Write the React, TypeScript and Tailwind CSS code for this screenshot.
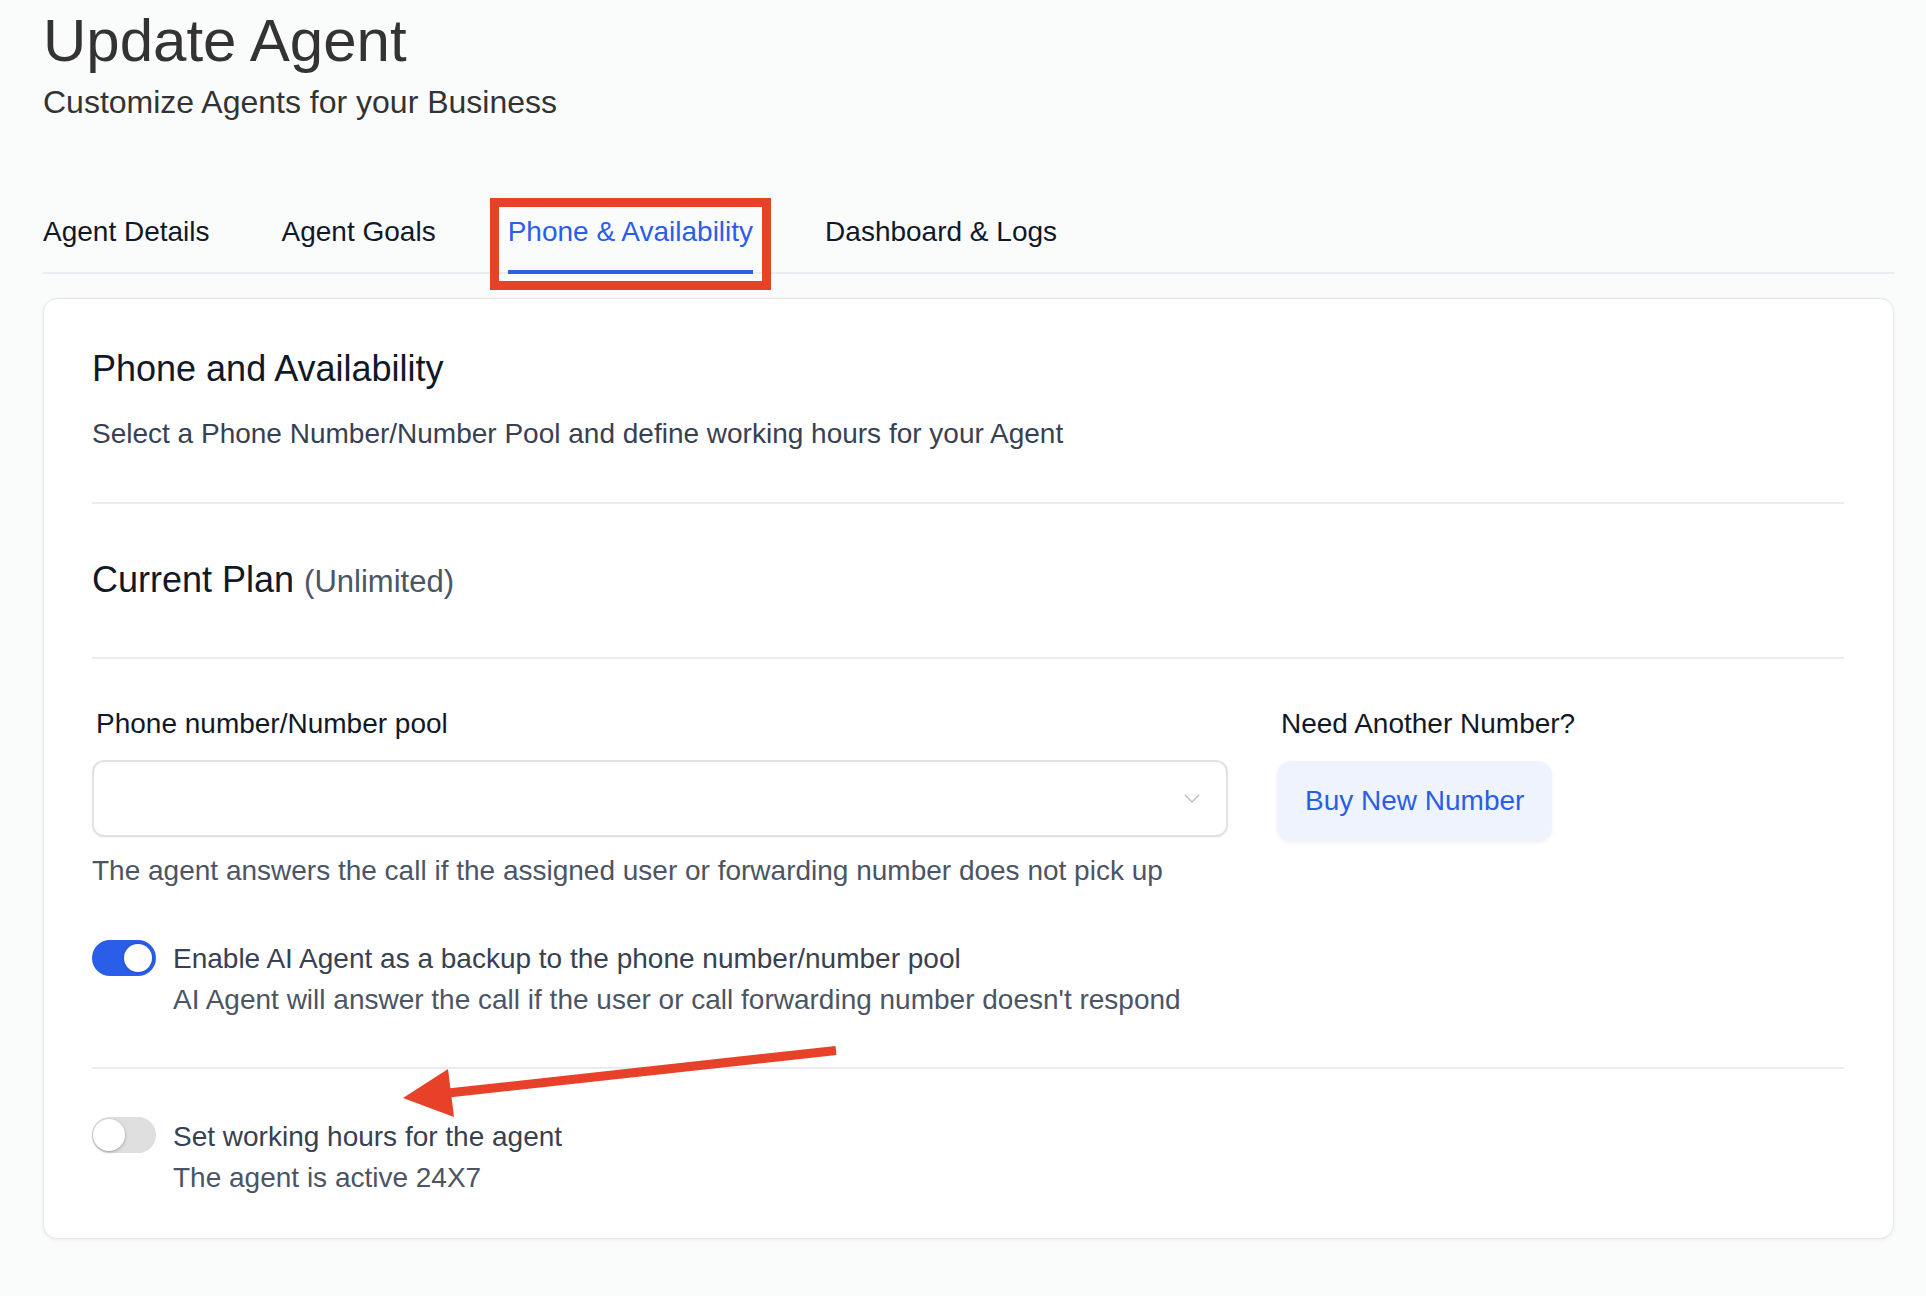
import { useState } from 'react';

const tabs = ['Agent Details', 'Agent Goals', 'Phone & Availability', 'Dashboard & Logs'];

// Thin chevron used by the select box
const ChevronDown = () => (
  <svg width="16" height="9" viewBox="0 0 16 9" fill="none">
    <polyline points="1,1 8,8 15,1" stroke="#b3b6bd" strokeWidth="1.2" fill="none" />
  </svg>
);

function Toggle({ on, onClick }: { on: boolean; onClick: () => void }) {
  return (
    <button
      onClick={onClick}
      className={`relative shrink-0 w-[64px] h-[36px] rounded-full transition-colors ${
        on ? 'bg-[#2a5ee8]' : 'bg-[#dedede]'
      }`}
      aria-pressed={on}
    >
      <span
        className={`absolute rounded-full bg-white ${
          on
            ? 'top-[4px] left-[32px] w-[28px] h-[28px] shadow-[0_0_3px_rgba(0,0,0,0.25)]'
            : 'top-[2px] left-[1px] w-[32px] h-[32px] shadow-[0_1px_3px_rgba(0,0,0,0.3)]'
        }`}
      />
    </button>
  );
}

export default function App() {
  const [activeTab, setActiveTab] = useState(2);
  const [backup, setBackup] = useState(true);
  const [hours, setHours] = useState(false);

  return (
    <div className="relative min-h-screen bg-[#fafbfb] pl-[43px] pr-[32px] pb-[58px] font-['Liberation_Sans',Arial,sans-serif]">
      {/* Header */}
      <h1 className="pt-[11px] text-[60px] leading-none text-[#333333]">Update Agent</h1>
      <p className="mt-[11px] text-[32px] leading-[40px] text-[#333333]">Customize Agents for your Business</p>

      {/* Tabs */}
      <div className="mt-[90px] flex gap-[72px] border-b-2 border-[#ebecf0]">
        {tabs.map((tab, i) => (
          <button
            key={tab}
            onClick={() => setActiveTab(i)}
            className={`relative -mb-[2px] pb-[18px] border-b-4 text-[28px] leading-[40px] ${
              i === activeTab ? 'text-[#2a5ee8] border-[#2a5ee8]' : 'text-[#111827] border-transparent'
            }`}
          >
            {tab}
            {i === 2 && (
              <span className="absolute -left-[18px] -right-[18px] -top-[14px] -bottom-[20px] border-[9px] border-[#e8412a] pointer-events-none" />
            )}
          </button>
        ))}
      </div>

      {/* Card */}
      <div className="mt-[24px] rounded-[14px] border border-[#e6e7ed] bg-white pl-[48px] pr-[49px] pt-[48px] pb-[41px] shadow-[0_1px_4px_rgba(0,0,0,0.06)]">
        <h2 className="text-[36px] leading-[44px] text-[#111827]">Phone and Availability</h2>
        <p className="mt-[23px] text-[28px] leading-[40px] text-[#374151]">
          Select a Phone Number/Number Pool and define working hours for your Agent
        </p>

        <div className="mt-[48px] h-[2px] bg-[#ececf0]" />

        <h3 className="mt-[54px] text-[36px] leading-[44px] text-[#111827]">
          Current Plan <span className="text-[31px] text-[#4b5563]">(Unlimited)</span>
        </h3>

        <div className="mt-[53px] h-[2px] bg-[#ececf0]" />

        <div className="mt-[45px] grid grid-cols-[1136px_1fr] gap-x-[49px]">
          <div>
            <label className="block pl-[4px] text-[28px] leading-[40px] text-[#111827]">Phone number/Number pool</label>
            <div className="mt-[16px] flex h-[77px] items-center justify-end rounded-[12px] border-2 border-[#e1e2e7] bg-white pr-[26px] shadow-[0_1px_2px_rgba(0,0,0,0.04)]">
              <ChevronDown />
            </div>
            <p className="mt-[14px] text-[28px] leading-[40px] text-[#4b5563]">
              The agent answers the call if the assigned user or forwarding number does not pick up
            </p>
          </div>
          <div>
            <div className="pl-[4px] text-[28px] leading-[40px] text-[#111827]">Need Another Number?</div>
            <button className="mt-[17px] h-[80px] rounded-[14px] bg-[#eef3fe] px-[28px] text-[28px] text-[#2a5ee8] shadow-[0_2px_4px_rgba(0,0,0,0.06)]">
              Buy New Number
            </button>
          </div>
        </div>

        <div className="mt-[49px] flex items-start gap-[17px]">
          <Toggle on={backup} onClick={() => setBackup(!backup)} />
          <div className="text-[28px] leading-[38px]">
            <div className="text-[#374151]">Enable AI Agent as a backup to the phone number/number pool</div>
            <div className="mt-[3px] text-[#4b5563]">AI Agent will answer the call if the user or call forwarding number doesn't respond</div>
          </div>
        </div>

        <div className="mt-[48px] h-[2px] bg-[#ececf0]" />

        <div className="mt-[48px] flex items-start gap-[17px]">
          <Toggle on={hours} onClick={() => setHours(!hours)} />
          <div className="pt-[1px] text-[28px] leading-[38px]">
            <div className="text-[#374151]">Set working hours for the agent</div>
            <div className="mt-[3px] text-[#4b5563]">The agent is active 24X7</div>
          </div>
        </div>
      </div>

      {/* Annotation arrow */}
      <svg className="pointer-events-none absolute left-0 top-0" width="1926" height="1296">
        <line x1="448" y1="1093" x2="836" y2="1050.5" stroke="#e8412a" strokeWidth="9" />
        <polygon points="403,1098 448,1069 454,1117" fill="#e8412a" />
      </svg>
    </div>
  );
}
